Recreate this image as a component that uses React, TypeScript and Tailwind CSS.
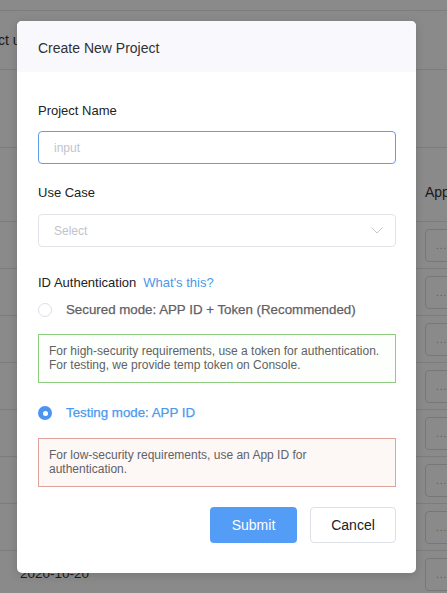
import React from "react";

const rows = [
  "2020-10-27",
  "2020-10-26",
  "2020-10-25",
  "2020-10-24",
  "2020-10-23",
  "2020-10-22",
  "2020-10-21",
  "2020-10-20",
];

function Background() {
  return (
    <div className="flex flex-col text-[#333] text-[13px]">
      <div className="h-[11px] border-b border-[#e6e6e6]" />
      <div className="h-[59px] border-b border-[#e6e6e6] flex items-center">
        <span className="-ml-[30px] text-[14px] text-[#333] whitespace-nowrap">Select use case</span>
      </div>
      <div className="h-[78px] border-b border-[#e6e6e6]" />
      <div className="h-[74px] border-b border-[#e6e6e6] flex items-center pt-[16px]">
        <span className="ml-[20px] w-[405px] shrink-0 text-[14px]">Created</span>
        <span className="text-[14px] whitespace-nowrap">App ID</span>
      </div>
      {rows.map((d) => (
        <div key={d} className="h-[47px] shrink-0 border-b border-[#e6e6e6] flex items-center">
          <span className="ml-[20px] w-[405px] shrink-0 text-[13.5px] pt-[1px]">{d}</span>
          <div className="h-[33px] w-[60px] shrink-0 rounded-[4px] border border-[#dcdcdc] flex items-center pl-[10px] text-[#aaa] text-[10px] tracking-[1px]">
            ...
          </div>
        </div>
      ))}
    </div>
  );
}

function Radio({ checked }: { checked?: boolean }) {
  return checked ? (
    <span className="w-[14px] h-[14px] rounded-full bg-[#4b95f1] flex items-center justify-center shrink-0">
      <span className="w-[5px] h-[5px] rounded-full bg-white" />
    </span>
  ) : (
    <span className="w-[14px] h-[14px] rounded-full border border-[#dcdfe6] bg-white shrink-0" />
  );
}

export default function App() {
  return (
    <div
      className="relative w-[447px] h-[593px] overflow-hidden bg-white"
      style={{ fontFamily: '"Liberation Sans", Arial, sans-serif' }}
    >
      <Background />
      <div className="absolute inset-0 bg-black/[0.46]" />
      <div className="absolute left-[17px] top-[21px] w-[399px] rounded-[5px] bg-white shadow-[0_2px_10px_rgba(0,0,0,0.15)] overflow-hidden">
        <div className="h-[51px] bg-[#f8f8fd] flex items-center px-[21px] pt-[3px] text-[14px] text-[#303133]">
          Create New Project
        </div>
        <div className="px-[21px] pr-[20px] pt-[30px] pb-[30px] flex flex-col">
          <div className="text-[13px] leading-[18px] text-[#222]">Project Name</div>
          <div className="mt-[11px] h-[33px] rounded-[4px] border border-[#5f9ee6] flex items-center px-[15px] text-[12px] text-[#c0c4cc]">
            input
          </div>
          <div className="mt-[20px] text-[13px] leading-[18px] text-[#222]">Use Case</div>
          <div className="mt-[12px] h-[33px] rounded-[4px] border border-[#e1e3e8] flex items-center justify-between pl-[15px] pr-[12px] text-[12px] text-[#c0c4cc]">
            <span>Select</span>
            <svg width="12" height="7" viewBox="0 0 12 7" fill="none">
              <path d="M0.5 0.5 L6 6 L11.5 0.5" stroke="#c4c7cd" strokeWidth="1" />
            </svg>
          </div>
          <div className="mt-[27px] flex items-center gap-[7px] text-[13px] leading-[18px]">
            <span className="text-[#222]">ID Authentication</span>
            <span className="text-[#4a98ea]">What's this?</span>
          </div>
          <div className="mt-[9px] flex items-center gap-[14px] h-[18px]">
            <Radio />
            <span className="text-[13.3px] text-[#5f6165] [-webkit-text-stroke:0.25px_#5f6165]">
              Secured mode: APP ID + Token (Recommended)
            </span>
          </div>
          <div className="mt-[15px] h-[49px] border border-[#8ecd80] bg-[#fcfffb] px-[10px] py-[9px] text-[12px] leading-[14.4px] text-[#606266]">
            For high-security requirements, use a token for authentication.
            <br />
            For testing, we provide temp token on Console.
          </div>
          <div className="mt-[21px] flex items-center gap-[14px] h-[18px]">
            <Radio checked />
            <span className="text-[13.3px] text-[#4b98ef] [-webkit-text-stroke:0.25px_#4b98ef]">
              Testing mode: APP ID
            </span>
          </div>
          <div className="mt-[16px] h-[49px] border border-[#dea39a] bg-[#fdf7f6] px-[10px] py-[9px] text-[12px] leading-[14.4px] text-[#606266]">
            For low-security requirements, use an App ID for
            <br />
            authentication.
          </div>
          <div className="mt-[20px] flex justify-end gap-[13px]">
            <button className="w-[87px] h-[36px] rounded-[4px] bg-[#549df6] text-white text-[14px]">
              Submit
            </button>
            <button className="w-[86px] h-[36px] rounded-[4px] border border-[#dcdfe6] bg-white text-[#222] text-[14px]">
              Cancel
            </button>
          </div>
        </div>
      </div>
    </div>
  );
}
